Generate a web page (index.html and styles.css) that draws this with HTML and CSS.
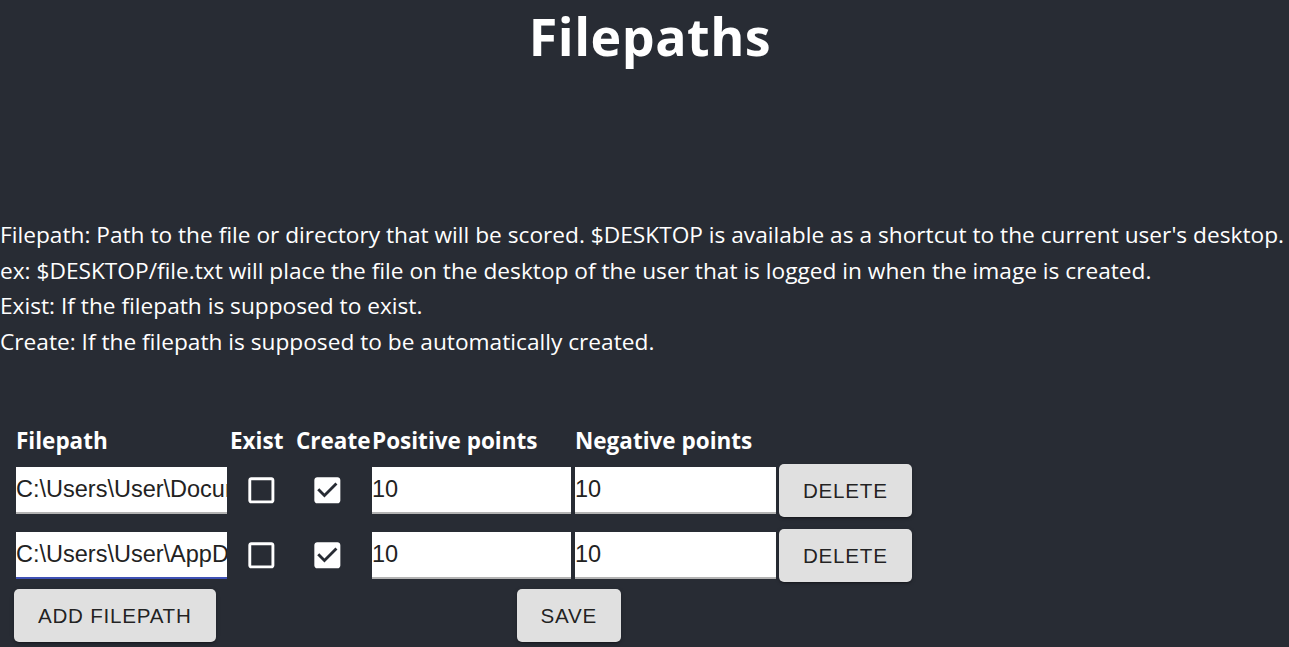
FILE: index.html
```html
<!DOCTYPE html>
<html lang="en">
<head>
<meta charset="utf-8">
<title>Filepaths</title>
<link rel="stylesheet" href="styles.css">
</head>
<body>
<div class="app">
  <h1 class="title">Filepaths</h1>
  <div class="desc">
    <div>Filepath: Path to the file or directory that will be scored. $DESKTOP is available as a shortcut to the current user's desktop.</div>
    <div>ex: $DESKTOP/file.txt will place the file on the desktop of the user that is logged in when the image is created.</div>
    <div>Exist: If the filepath is supposed to exist.</div>
    <div>Create: If the filepath is supposed to be automatically created.</div>
  </div>

  <div class="grid">
    <div class="th">Filepath</div>
    <div class="th">Exist</div>
    <div class="th">Create</div>
    <div class="th">Positive points</div>
    <div class="th">Negative points</div>
    <div class="th"></div>

    <div class="cell"><input class="field w-path" type="text" value="C:\Users\User\Documents\file.txt"></div>
    <div class="cell"><span class="cb"><svg viewBox="0 0 24 24"><path d="M19 5v14H5V5h14m0-2H5c-1.1 0-2 .9-2 2v14c0 1.1.9 2 2 2h14c1.1 0 2-.9 2-2V5c0-1.1-.9-2-2-2z"/></svg></span></div>
    <div class="cell"><span class="cb"><svg viewBox="0 0 24 24"><path d="M19 3H5c-1.11 0-2 .9-2 2v14c0 1.1.89 2 2 2h14c1.11 0 2-.9 2-2V5c0-1.1-.89-2-2-2zm-9 14l-5-5 1.41-1.41L10 14.17l7.59-7.59L19 8l-9 9z"/></svg></span></div>
    <div class="cell"><input class="field w-pos" type="text" value="10"></div>
    <div class="cell"><input class="field w-neg" type="text" value="10"></div>
    <div class="cell"><button class="btn">Delete</button></div>

    <div class="cell"><input class="field w-path focused" type="text" value="C:\Users\User\AppData\file.txt"></div>
    <div class="cell"><span class="cb"><svg viewBox="0 0 24 24"><path d="M19 5v14H5V5h14m0-2H5c-1.1 0-2 .9-2 2v14c0 1.1.9 2 2 2h14c1.1 0 2-.9 2-2V5c0-1.1-.9-2-2-2z"/></svg></span></div>
    <div class="cell"><span class="cb"><svg viewBox="0 0 24 24"><path d="M19 3H5c-1.11 0-2 .9-2 2v14c0 1.1.89 2 2 2h14c1.11 0 2-.9 2-2V5c0-1.1-.89-2-2-2zm-9 14l-5-5 1.41-1.41L10 14.17l7.59-7.59L19 8l-9 9z"/></svg></span></div>
    <div class="cell"><input class="field w-pos" type="text" value="10"></div>
    <div class="cell"><input class="field w-neg" type="text" value="10"></div>
    <div class="cell"><button class="btn">Delete</button></div>
  </div>

  <div class="actions">
    <button class="btn">Add Filepath</button>
    <button class="btn save">Save</button>
  </div>
</div>
</body>
</html>
```
FILE: styles.css
```css
html, body {
  margin: 0;
  padding: 0;
  background: #282c34;
  height: 100%;
  overflow: hidden;
}
.app {
  color: #ffffff;
  font-family: "Open Sans", "Noto Sans", sans-serif;
}
.title {
  margin: 0;
  padding-left: 11px;
  font-size: 52px;
  letter-spacing: 0.5px;
  line-height: 72px;
  font-weight: 700;
  text-align: center;
}
.desc {
  margin-top: 145px;
  font-size: 22.7px;
  line-height: 35.5px;
  white-space: nowrap;
}
.grid {
  margin: 67px 0 0 16px;
  display: grid;
  grid-template-columns: 214px 66px 76px 203px 204px auto;
  grid-template-rows: 30px 61px 65px;
}
.th {
  font-size: 22.5px;
  line-height: 30px;
  font-weight: 700;
  white-space: nowrap;
}
.cell {
  display: flex;
  align-items: center;
  align-self: end;
  height: 53px;
}
.field {
  box-sizing: border-box;
  height: 47px;
  margin: 0;
  padding: 0;
  border: 0;
  border-bottom: 2px solid #b3b3b3;
  background: #ffffff;
  color: #222222;
  font-family: "Liberation Sans", Arial, sans-serif;
  font-size: 23.5px;
  outline: none;
}
.field.focused {
  border-bottom-color: #3f51b5;
}
.w-path { width: 211px; }
.w-pos { width: 199px; }
.w-neg { width: 201px; }
.cb {
  display: inline-flex;
  padding: 0 13.7px;
}
.cb svg {
  width: 34.7px;
  height: 34.7px;
  fill: #ffffff;
  display: block;
}
.btn {
  box-sizing: border-box;
  height: 53px;
  padding: 0 24px;
  border: 0;
  border-radius: 5px;
  background: #e0e0e0;
  color: rgba(0, 0, 0, 0.87);
  font-family: "Liberation Sans", Arial, sans-serif;
  font-size: 20.6px;
  letter-spacing: 0.75px;
  text-transform: uppercase;
  box-shadow: 0 3px 1px -2px rgba(0,0,0,.2), 0 2px 2px 0 rgba(0,0,0,.14), 0 1px 5px 0 rgba(0,0,0,.12);
  cursor: pointer;
}
.actions {
  display: flex;
  margin: 7px 0 0 14px;
}
.save {
  margin-left: 301px;
}
```
